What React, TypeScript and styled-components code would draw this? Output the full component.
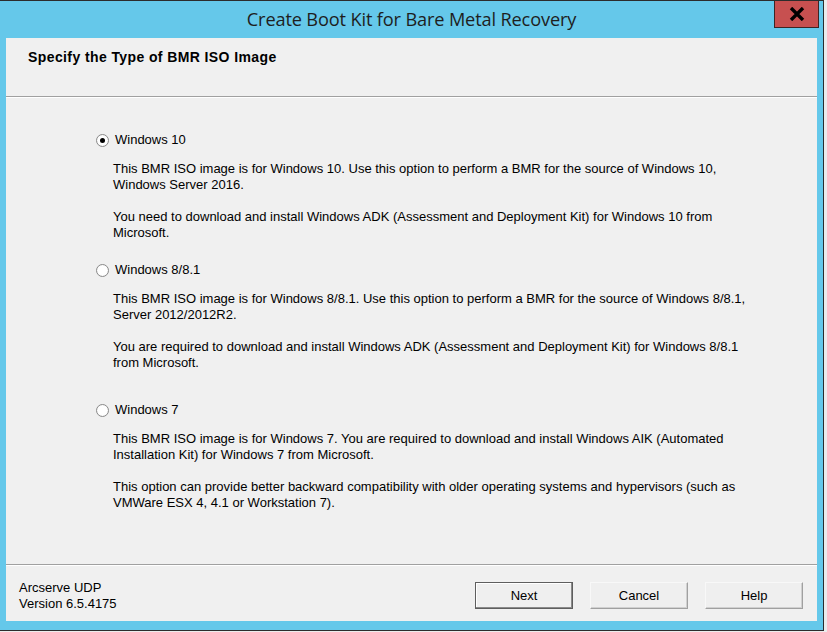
import React from 'react';
import styled, { createGlobalStyle } from 'styled-components';

/* -------------------------------------------------------------------------- */
/*                                    Data                                    */
/* -------------------------------------------------------------------------- */

type IsoOption = {
  id: string;
  label: string;
  checked?: boolean;
  gapBefore: number;
  paragraphs: string[][];
};

const options: IsoOption[] = [
  {
    id: 'win10',
    label: 'Windows 10',
    checked: true,
    gapBefore: 0,
    paragraphs: [
      [
        'This BMR ISO image is for Windows 10. Use this option to perform a BMR for the source of Windows 10,',
        'Windows Server 2016.',
      ],
      [
        'You need to download and install Windows ADK (Assessment and Deployment Kit) for Windows 10 from',
        'Microsoft.',
      ],
    ],
  },
  {
    id: 'win8',
    label: 'Windows 8/8.1',
    gapBefore: 21,
    paragraphs: [
      [
        'This BMR ISO image is for Windows 8/8.1. Use this option to perform a BMR for the source of Windows 8/8.1,',
        'Server 2012/2012R2.',
      ],
      [
        'You are required to download and install Windows ADK (Assessment and Deployment Kit) for Windows 8/8.1',
        'from Microsoft.',
      ],
    ],
  },
  {
    id: 'win7',
    label: 'Windows 7',
    gapBefore: 31,
    paragraphs: [
      [
        'This BMR ISO image is for Windows 7. You are required to download and install Windows AIK (Automated',
        'Installation Kit) for Windows 7 from Microsoft.',
      ],
      [
        'This option can provide better backward compatibility with older operating systems and hypervisors (such as',
        'VMWare ESX 4, 4.1 or Workstation 7).',
      ],
    ],
  },
];

/* -------------------------------------------------------------------------- */
/*                                  Component                                 */
/* -------------------------------------------------------------------------- */

const App = () => {
  return (
    <>
      <GlobalStyle />
      <Desktop>
        <Window>
          <TitleBar>
            <span />
            <Title>Create Boot Kit for Bare Metal Recovery</Title>
            <CloseButton>
              <svg width="16" height="14" viewBox="0 0 16 14">
                <path d="M2 1 L14 13 M14 1 L2 13" stroke="#000" strokeWidth="3.4" />
              </svg>
            </CloseButton>
          </TitleBar>

          <Client>
            <Header>Specify the Type of BMR ISO Image</Header>

            <Body>
              {options.map((opt) => (
                <Option key={opt.id} $gap={opt.gapBefore}>
                  <OptionLabel>
                    <Radio $checked={!!opt.checked} />
                    {opt.label}
                  </OptionLabel>
                  {opt.paragraphs.map((lines, i) => (
                    <Description key={i}>
                      {lines.map((line, j) => (
                        <div key={j}>{line}</div>
                      ))}
                    </Description>
                  ))}
                </Option>
              ))}
            </Body>

            <Footer>
              <Product>
                <div>Arcserve UDP</div>
                <div>Version 6.5.4175</div>
              </Product>
              <Buttons>
                <Button $default>Next</Button>
                <Button>Cancel</Button>
                <Button>Help</Button>
              </Buttons>
            </Footer>
          </Client>
        </Window>
      </Desktop>
    </>
  );
};

/* -------------------------------------------------------------------------- */
/*                                    STYLES                                  */
/* -------------------------------------------------------------------------- */

const GlobalStyle = createGlobalStyle`
  html, body {
    margin: 0;
    padding: 0;
    background: #ececec;
  }
  body {
    font-family: "Liberation Sans", Arial, sans-serif;
  }
`;

const Desktop = styled.div`
  width: 827px;
  height: 632px;
  overflow: hidden;
`;

const Window = styled.div`
  width: 823px;
  height: 629px;
  background: #65c8ea;
  border-top: 1px solid #2c2c2c;
  border-right: 1px solid #2c2c2c;
  border-bottom: 1px solid #2c2c2c;
  display: flex;
  flex-direction: column;
`;

const TitleBar = styled.div`
  height: 37px;
  display: grid;
  grid-template-columns: 1fr auto 1fr;
  align-items: start;
`;

const Title = styled.div`
  font-family: "Open Sans", "Noto Sans", sans-serif;
  font-size: 18.2px;
  color: #1e1e1e;
  line-height: 22px;
  padding-top: 7px;
  letter-spacing: -0.15px;
`;

const CloseButton = styled.div`
  justify-self: end;
  margin-right: 4px;
  width: 43px;
  height: 26px;
  background: #c75050;
  border: 1px solid #3d2525;
  border-top: none;
  display: flex;
  align-items: center;
  justify-content: center;
`;

const Client = styled.div`
  margin: 0 6px 0 6px;
  height: 583px;
  background: #f0f0f0;
  display: flex;
  flex-direction: column;
  font-size: 13px;
  color: #000;
`;

const Header = styled.div`
  height: 59px;
  padding: 11px 0 0 22px;
  box-sizing: border-box;
  font-weight: bold;
  font-size: 14px;
  letter-spacing: 0.4px;
  border-bottom: 1px solid #a0a0a0;
  box-shadow: 0 1px 0 #ffffff;
`;

const Body = styled.div`
  flex: 1;
  padding: 35px 0 0 90px;
`;

const Option = styled.div<{ $gap: number }>`
  margin-top: ${(p) => p.$gap}px;
`;

const OptionLabel = styled.label`
  display: flex;
  align-items: center;
  gap: 6px;
  line-height: 16px;
  white-space: nowrap;
`;

const Radio = styled.span<{ $checked: boolean }>`
  width: 11px;
  height: 11px;
  border-radius: 50%;
  border: 1px solid #8a8a8a;
  background: radial-gradient(circle, #ffffff 55%, #e4e4e4 100%);
  position: relative;
  flex-shrink: 0;

  &::after {
    content: '';
    display: ${(p) => (p.$checked ? 'block' : 'none')};
    position: absolute;
    left: 3px;
    top: 3px;
    width: 5px;
    height: 5px;
    border-radius: 50%;
    background: #000;
  }
`;

const Description = styled.div`
  margin: 13px 0 0 17px;
  line-height: 16px;
  white-space: nowrap;

  & + & {
    margin-top: 16px;
  }
`;

const Footer = styled.div`
  height: 57px;
  box-sizing: border-box;
  border-top: 1px solid #a0a0a0;
  box-shadow: inset 0 1px 0 #ffffff;
  display: flex;
  align-items: flex-start;
  justify-content: space-between;
  padding: 15px 14px 0 13px;
`;

const Product = styled.div`
  line-height: 16px;
`;

const Buttons = styled.div`
  display: flex;
  gap: 17px;
  padding-top: 2px;
`;

const Button = styled.button<{ $default?: boolean }>`
  width: 98px;
  height: 27px;
  font-family: "Liberation Sans", Arial, sans-serif;
  font-size: 13px;
  color: #000;
  background: #efefef;
  padding: 0;
  border: 1px solid ${(p) => (p.$default ? '#5e5e5e' : '#a0a0a0')};
  border-top-color: ${(p) => (p.$default ? '#5e5e5e' : '#f8f8f8')};
  border-left-color: ${(p) => (p.$default ? '#5e5e5e' : '#f8f8f8')};
  box-shadow: ${(p) =>
    p.$default
      ? 'inset -1px -1px 0 #8a8a8a, inset 1px 1px 0 #ffffff'
      : 'inset -1px -1px 0 #d0d0d0'};
`;

export default App;
